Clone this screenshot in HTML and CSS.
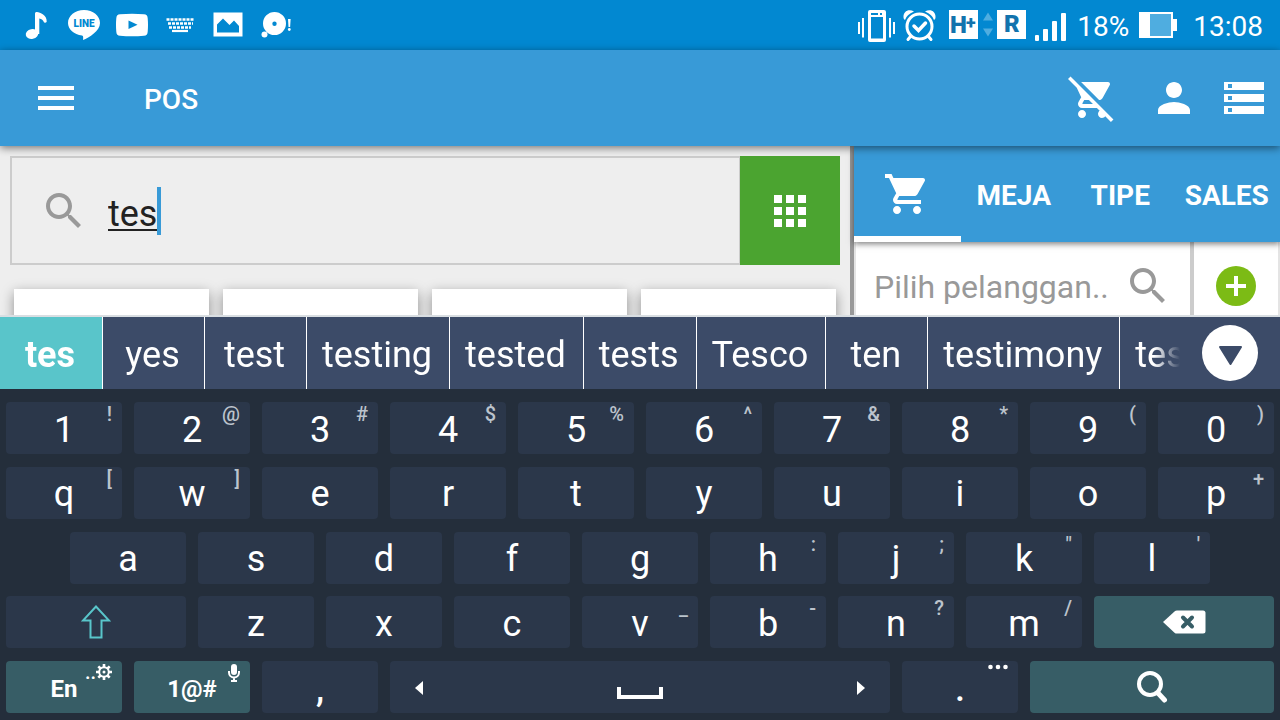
FILE: index.html
```html
<!DOCTYPE html>
<html lang="id">
<head>
    <meta charset="UTF-8">
    <meta name="viewport" content="width=device-width, initial-scale=1.0">
    <title>POS</title>
    <link rel="stylesheet" href="styles.css">
</head>
<body>
    <div class="status-bar">
        <div class="notifications">
            <svg width="32" height="32" viewBox="0 0 32 32" fill="#fff"><ellipse cx="12" cy="25" rx="6.3" ry="4.8" transform="rotate(-12 12 25)"/><path d="M15 4.500q0-2 2-1.500c3 .7 10 3 9.700 9.500 0 1.500-2.500 1.500-3 .2-.5-1.500-2-2.700-4.400-3.200V25H15z"/></svg>
            <svg width="32" height="32" viewBox="0 0 32 32"><path fill="#fff" d="M16 1C7 1 0 6.800 0 14c0 6.500 6 11.500 14 12.500 1.500.3 1.300 2 1 4.500C21 28.500 32 22 32 14 32 6.800 25 1 16 1z"/><text class="line-logo" x="16" y="18" text-anchor="middle">LINE</text></svg>
            <svg width="32" height="32" viewBox="0 0 32 32"><path fill="#fff" d="M4 5.300q12-1 24 0 3.500.2 3.700 4 .6 6.700 0 13.400-.2 3.800-3.700 4-12 1-24 0-3.500-.2-3.700-4-.6-6.700 0-13.400.2-3.800 3.700-4z"/><path fill="#0288d1" d="M12.500 11.500v8.500l9-4.200z"/></svg>
            <svg width="32" height="32" viewBox="0 0 32 32" stroke="#fff" fill="none"><path stroke-width="2.500" stroke-dasharray="3 1" d="M2.500 10.500h27M4 14.500h25"/><path stroke-width="2.500" stroke-dasharray="3 1" d="M5 18.500h22"/><path stroke-width="2.200" d="M8 22h16"/></svg>
            <svg width="32" height="32" viewBox="0 0 32 32"><path fill="#fff" fill-rule="evenodd" d="M1.500 3.500h29v24h-29zM5 23.500h22V17l-5-5.500-4.500 4.500L11 9.500 5 15.500z"/></svg>
            <svg width="32" height="32" viewBox="0 0 32 32" fill="#fff"><path fill-rule="evenodd" d="M14.500 3a11.500 11.500 0 1 1 0 23 11.500 11.500 0 0 1 0-23zm0 9.500a2.200 2.200 0 1 0 0 4.400 2.200 2.200 0 0 0 0-4.400z"/><circle cx="4.500" cy="25.500" r="3"/><path d="M28 10h2.600l-.5 8h-1.600z"/><circle cx="29.300" cy="20.500" r="1.400"/></svg>
        </div>
        <div class="system">
            <svg width="38" height="34" viewBox="0 0 38 34"><path fill="#fff" fill-rule="evenodd" d="M13 2h14q2 0 2 2v28q0 2-2 2H13q-2 0-2-2V4q0-2 2-2zm1 7v21.500h12V9zm0-4v2h7V5zm9 0v2h2V5z"/><path stroke="#fff" stroke-width="2" d="M2 14v12M6 10v19.500M33 10v19.500M37 14v12"/></svg>
            <svg width="38" height="34" viewBox="0 0 38 34" fill="none" stroke="#fff"><circle cx="16.500" cy="18.500" r="12.500" stroke-width="3"/><path stroke-width="3.500" stroke-linecap="round" d="M11 18l4.500 4.500 7-7.500"/><path stroke-width="3" stroke-linecap="round" d="M7.500 28.500L5 31.500M25.500 28.500l2.500 3"/><path fill="#fff" stroke="none" d="M11 3.500C6 .5 0 3 .5 9.500q0 1.500 1.500 2.500 1.500-5.500 9-8.500zM22 3.500c5-3 11-.5 10.500 6q0 1.500-1.500 2.500-1.500-5.500-9-8.500z"/></svg>
            <svg width="78" height="34" viewBox="0 0 78 34"><path fill="#fff" d="M0 2h29v29H0zM48 2h29v29H48z"/><path fill="#4fade0" d="M39 4.500l5 8H34zM39 28.500l5-8H34z"/><text class="net-label" x="1" y="25">H</text><text class="net-plus" x="17" y="21">+</text><text class="net-label" x="55" y="24">R</text></svg>
            <svg width="34" height="34" viewBox="0 0 34 34" fill="#fff"><rect y="27" width="4" height="6" rx="1"/><rect x="8" y="21" width="5" height="12" rx="1"/><rect x="17" y="13" width="5" height="20" rx="1"/><rect x="26" y="5" width="5" height="28" rx="1"/></svg>
            <span class="status-text">18%</span>
            <svg width="48" height="34" viewBox="0 0 48 34"><path fill="#fff" d="M2 4h34v7h4v12h-4v7H2z"/><path fill="#4fade0" d="M13 6h21v22H13z"/></svg>
            <span class="status-text">13:08</span>
        </div>
    </div>

    <header class="app-bar">
        <button class="icon-btn" aria-label="Menu"><svg class="icon" viewBox="0 0 24 24"><path d="M3 18h18v-2H3v2zm0-5h18v-2H3v2zm0-7v2h18V6H3z"/></svg></button>
        <h1 class="title">POS</h1>
        <div class="actions">
            <button class="icon-btn clear-cart" aria-label="Kosongkan"><svg class="icon" viewBox="0 0 24 24"><path d="M22.730 22.730L2.770 2.770 2 2l-.73-.73L0 2.540l4.390 4.390 2.210 4.660-1.350 2.450c-.16.28-.25.61-.25.96 0 1.100.9 2 2 2h7.460l1.380 1.380c-.5.36-.83.95-.83 1.620 0 1.100.89 2 1.990 2 .67 0 1.260-.33 1.620-.84L21.460 24l1.270-1.270zM7.420 15c-.14 0-.25-.11-.25-.25l.03-.12.9-1.630h2.360l2 2H7.420zm8.130-2c.75 0 1.410-.41 1.750-1.030l3.580-6.490c.08-.14.12-.31.12-.48 0-.55-.45-1-1-1H6.540l9.010 9zM7 18c-1.100 0-1.990.9-1.990 2S5.900 22 7 22s2-.9 2-2-.9-2-2-2z"/></svg></button>
            <button class="icon-btn" aria-label="Akun"><svg class="icon" viewBox="0 0 24 24"><path d="M12 12c2.210 0 4-1.790 4-4s-1.790-4-4-4-4 1.790-4 4 1.790 4 4 4zm0 2c-2.670 0-8 1.340-8 4v2h16v-2c0-2.660-5.330-4-8-4z"/></svg></button>
            <button class="icon-btn" aria-label="Daftar"><svg class="icon" viewBox="0 0 24 24"><path d="M2 20h20v-4H2v4zm2-3h2v2H4v-2zM2 4v4h20V4H2zm4 3H4V5h2v2zm-4 7h20v-4H2v4zm2-3h2v2H4v-2z"/></svg></button>
        </div>
    </header>

    <main class="content">
        <section class="products">
            <div class="search-row">
                <label class="search-box">
                    <svg class="icon" viewBox="0 0 24 24"><path d="M15.500 14h-.79l-.28-.27C15.410 12.590 16 11.110 16 9.500 16 5.910 13.090 3 9.500 3S3 5.910 3 9.500 5.910 16 9.500 16c1.610 0 3.090-.59 4.230-1.570l.27.28v.79l5 4.990L20.490 19l-4.990-5zm-6 0C7.010 14 5 11.990 5 9.500S7.010 5 9.500 5 14 7.010 14 9.500 11.990 14 9.500 14z"/></svg>
                    <span class="search-field">
                        <input type="text" class="search-input" value="tes" aria-label="Cari produk">
                        <span class="caret"></span>
                    </span>
                </label>
                <button class="grid-btn" aria-label="Kategori"><svg class="icon" viewBox="0 0 24 24"><path d="M4 8h4V4H4v4zm6 12h4v-4h-4v4zm-6 0h4v-4H4v4zm0-6h4v-4H4v4zm6 0h4v-4h-4v4zm6-10v4h4V4h-4zm-6 4h4V4h-4v4zm6 6h4v-4h-4v4zm0 6h4v-4h-4v4z"/></svg></button>
            </div>
            <div class="cards">
                <div class="card"></div>
                <div class="card"></div>
                <div class="card"></div>
                <div class="card"></div>
            </div>
        </section>

        <section class="order">
            <nav class="tabs">
                <button class="tab active" aria-label="Keranjang"><svg class="icon" viewBox="0 0 24 24"><path d="M7 18c-1.100 0-1.990.9-1.990 2S5.900 22 7 22s2-.9 2-2-.9-2-2-2zM1 2v2h2l3.600 7.590-1.350 2.450c-.16.28-.25.61-.25.96 0 1.100.9 2 2 2h12v-2H7.420c-.14 0-.25-.11-.25-.25l.03-.12.9-1.630h7.450c.75 0 1.410-.41 1.750-1.030l3.580-6.490c.08-.14.12-.31.12-.48 0-.55-.45-1-1-1H5.210l-.94-2H1zm16 16c-1.100 0-1.990.9-1.990 2s.89 2 1.990 2 2-.9 2-2-.9-2-2-2z"/></svg></button>
                <button class="tab">MEJA</button>
                <button class="tab">TIPE</button>
                <button class="tab">SALES</button>
            </nav>
            <div class="customer-row">
                <label class="customer-box">
                    <input type="text" class="customer-input" placeholder="Pilih pelanggan.." aria-label="Pelanggan">
                    <svg class="icon" viewBox="0 0 24 24"><path d="M15.500 14h-.79l-.28-.27C15.410 12.590 16 11.110 16 9.500 16 5.910 13.090 3 9.500 3S3 5.910 3 9.500 5.910 16 9.500 16c1.610 0 3.090-.59 4.230-1.570l.27.28v.79l5 4.990L20.490 19l-4.990-5zm-6 0C7.010 14 5 11.990 5 9.500S7.010 5 9.500 5 14 7.010 14 9.500 11.990 14 9.500 14z"/></svg>
                </label>
                <button class="add-btn" aria-label="Tambah pelanggan"><svg width="40" height="40" viewBox="0 0 40 40"><circle cx="20" cy="20" r="20" fill="#7cbb15"/><path fill="#fff" d="M18 10h4v8h8v4h-8v8h-4v-8h-8v-4h8z"/></svg></button>
            </div>
        </section>
    </main>

    <div class="keyboard">
        <div class="suggestions">
            <div class="words">
                <button class="word selected">tes</button>
                <button class="word">yes</button>
                <button class="word">test</button>
                <button class="word">testing</button>
                <button class="word">tested</button>
                <button class="word">tests</button>
                <button class="word">Tesco</button>
                <button class="word">ten</button>
                <button class="word">testimony</button>
                <button class="word last">tes</button>
            </div>
            <button class="more-btn" aria-label="Lainnya"><svg width="56" height="56" viewBox="0 0 56 56"><circle cx="28" cy="28" r="28" fill="#fff"/><path fill="#3c4b68" stroke="#3c4b68" stroke-width="2" stroke-linejoin="round" d="M18 22h21L28.500 39z"/></svg></button>
        </div>

        <div class="keys">
            <button class="key">1<span class="hint">!</span></button>
            <button class="key">2<span class="hint">@</span></button>
            <button class="key">3<span class="hint">#</span></button>
            <button class="key">4<span class="hint">$</span></button>
            <button class="key">5<span class="hint">%</span></button>
            <button class="key">6<span class="hint">^</span></button>
            <button class="key">7<span class="hint">&amp;</span></button>
            <button class="key">8<span class="hint">*</span></button>
            <button class="key">9<span class="hint">(</span></button>
            <button class="key">0<span class="hint">)</span></button>

            <button class="key">q<span class="hint">[</span></button>
            <button class="key">w<span class="hint">]</span></button>
            <button class="key">e</button>
            <button class="key">r</button>
            <button class="key">t</button>
            <button class="key">y</button>
            <button class="key">u</button>
            <button class="key">i</button>
            <button class="key">o</button>
            <button class="key">p<span class="hint">+</span></button>

            <button class="key row-start">a</button>
            <button class="key">s</button>
            <button class="key">d</button>
            <button class="key">f</button>
            <button class="key">g</button>
            <button class="key">h<span class="hint">:</span></button>
            <button class="key">j<span class="hint">;</span></button>
            <button class="key">k<span class="hint">"</span></button>
            <button class="key">l<span class="hint">'</span></button>

            <button class="key wide icon-key shift" aria-label="Shift"><svg width="30" height="36" viewBox="0 0 30 36"><path fill="none" stroke="#59c5ca" stroke-width="2" d="M15 2.500L2 16.500h7.500v17h11v-17H28z"/></svg></button>
            <button class="key">z</button>
            <button class="key">x</button>
            <button class="key">c</button>
            <button class="key">v<span class="hint">_</span></button>
            <button class="key">b<span class="hint">-</span></button>
            <button class="key">n<span class="hint">?</span></button>
            <button class="key">m<span class="hint">/</span></button>
            <button class="key wide icon-key teal" aria-label="Hapus"><svg width="44" height="24" viewBox="0 0 44 24"><path fill="#fff" d="M1 12L12.500 1.500q1-.9 2.500-.9h26q2.500 0 2.500 2.500v18q0 2.500-2.500 2.500H15q-1.500 0-2.500-.9z"/><path stroke="#375d66" stroke-width="4" stroke-linecap="round" d="M21 7.500l9 9M30 7.500l-9 9"/></svg></button>

            <button class="key small teal">En<span class="hint bright">..<svg width="16" height="16" viewBox="0 0 16 16"><circle cx="8" cy="8" r="4.800" fill="none" stroke="#fff" stroke-width="2"/><circle cx="8" cy="8" r="1.500" fill="#fff"/><path stroke="#fff" stroke-width="2.600" d="M8 0v3M8 13v3M0 8h3M13 8h3M2.300 2.300l2.200 2.200M11.500 11.500l2.200 2.200M2.300 13.700l2.200-2.200M11.500 4.500l2.200-2.200"/></svg></span></button>
            <button class="key small teal">1@#<span class="hint bright"><svg width="12" height="18" viewBox="0 0 12 18"><rect x="3" width="6" height="11" rx="3" fill="#fff"/><path fill="none" stroke="#fff" stroke-width="2" d="M1 7v1.500a5 5 0 0 0 10 0V7M6 13v4M3 17h6"/></svg></span></button>
            <button class="key punct">,</button>
            <button class="key space" aria-label="Spasi">
                <svg width="8" height="14" viewBox="0 0 8 14"><path fill="#fff" d="M8 0v14L0 7z"/></svg>
                <svg class="space-mark" width="46" height="12" viewBox="0 0 46 12"><path fill="#fff" d="M0 0h4v8h38V0h4v12H0z"/></svg>
                <svg width="8" height="14" viewBox="0 0 8 14"><path fill="#fff" d="M0 0v14l8-7z"/></svg>
            </button>
            <button class="key punct">.<span class="hint bright"><svg width="20" height="6" viewBox="0 0 20 6" fill="#fff"><circle cx="2.500" cy="3" r="2.300"/><circle cx="10" cy="3" r="2.300"/><circle cx="17.500" cy="3" r="2.300"/></svg></span></button>
            <button class="key enter icon-key teal" aria-label="Cari"><svg width="32" height="34" viewBox="0 0 32 34" fill="none" stroke="#fff"><circle cx="14" cy="14" r="11" stroke-width="4"/><path stroke-width="5" stroke-linecap="round" d="M22 23l6.500 7"/></svg></button>
        </div>
    </div>
</body>
</html>
```
FILE: styles.css
```css
* {
    box-sizing: border-box;
}
body {
    margin: 0;
    height: 100vh;
    display: flex;
    flex-direction: column;
    overflow: hidden;
    font-family: Roboto, sans-serif;
    background-color: #eee;
    color: #fff;
}
button, input {
    border: none;
    padding: 0;
    margin: 0;
    background: none;
    color: inherit;
    font: inherit;
    outline: none;
}
svg {
    display: block;
    flex: none;
}
.icon {
    width: 48px;
    height: 48px;
    fill: currentColor;
}

/* status bar */
.status-bar {
    display: flex;
    justify-content: space-between;
    height: 50px;
    flex: none;
    padding: 0 17px 0 20px;
    background-color: #0288d1;
}
.notifications, .system {
    display: flex;
    align-items: center;
}
.notifications {
    gap: 16px;
}
.system {
    gap: 8px;
}
.status-text {
    padding-top: 3px;
    font-size: 28px;
}
.line-logo {
    font: 900 10px Roboto, sans-serif;
    fill: #0288d1;
}
.net-label, .net-plus {
    font: 900 24px Roboto, sans-serif;
    fill: #1273ad;
}
.net-plus {
    font-size: 18px;
}

/* app bar */
.app-bar {
    position: relative;
    z-index: 1;
    display: flex;
    align-items: center;
    height: 96px;
    flex: none;
    padding: 0 12px 0 32px;
    background-color: #389ad7;
    box-shadow: 0 2px 8px rgba(0, 0, 0, 0.5);
}
.title {
    margin: 0 0 0 64px;
    padding-top: 3px;
    font-size: 28px;
    font-weight: 500;
}
.actions {
    display: flex;
    gap: 22px;
    margin-left: auto;
}
.clear-cart {
    margin-right: 12px;
}

/* content */
.content {
    display: flex;
    flex: 1;
    min-height: 0;
    overflow: hidden;
}
.products {
    flex: 1;
    padding: 10px 10px 0;
    border-right: 4px solid #999;
}
.search-row {
    display: flex;
    height: 109px;
}
.search-box {
    display: flex;
    align-items: center;
    flex: 1;
    gap: 20px;
    padding-left: 28px;
    border: 2px solid #ccc;
    border-right-width: 1px;
    color: #999;
}
.search-field {
    position: relative;
    flex: 1;
}
.search-input {
    display: block;
    width: 100%;
    height: 48px;
    padding-top: 6px;
    font-size: 36px;
    color: #222;
    text-decoration: underline;
    text-decoration-thickness: 2px;
    text-underline-offset: 3px;
}
.caret {
    position: absolute;
    left: 49px;
    top: 0;
    width: 4px;
    height: 48px;
    background-color: #389ad7;
}
.grid-btn {
    display: flex;
    align-items: center;
    justify-content: center;
    width: 100px;
    background-color: #4ba430;
}
.cards {
    display: grid;
    grid-template-columns: repeat(4, 1fr);
    gap: 14px;
    padding: 24px 4px 0;
}
.card {
    height: 200px;
    background-color: #fff;
    box-shadow: 0 4px 12px rgba(0, 0, 0, 0.4);
}

/* order panel */
.order {
    width: 426px;
    background-color: #e4e4e4;
}
.tabs {
    position: relative;
    display: flex;
    height: 96px;
    background-color: #389ad7;
    box-shadow: 0 2px 6px rgba(0, 0, 0, 0.5);
}
.tab {
    display: flex;
    align-items: center;
    justify-content: center;
    flex: 1;
    padding-top: 3px;
    font-size: 28px;
    font-weight: 700;
}
.tab.active {
    padding-top: 0;
    box-shadow: inset 0 -6px #fff;
}
.customer-row {
    display: flex;
    height: 88px;
    padding: 0 2px;
}
.customer-box {
    display: flex;
    align-items: center;
    flex: 1;
    min-width: 0;
    padding: 0 18px;
    border-right: 4px solid #ccc;
    background-color: #fff;
    color: #999;
}
.customer-input {
    flex: 1;
    min-width: 0;
    padding-top: 2px;
    font-size: 32px;
}
.customer-input::placeholder {
    color: #999;
}
.add-btn {
    display: flex;
    align-items: center;
    justify-content: center;
    width: 84px;
    flex: none;
    background-color: #fff;
}

/* keyboard */
.keyboard {
    position: relative;
    z-index: 1;
    flex: none;
    border-top: 2px solid #d9dee2;
    background-color: #242e3b;
}
.suggestions {
    display: flex;
    align-items: center;
    height: 72px;
    padding-right: 22px;
    background-color: #3c4b68;
}
.words {
    display: flex;
    flex: 1;
    height: 100%;
    margin-right: 12px;
    overflow: hidden;
    -webkit-mask-image: linear-gradient(to left, transparent 10px, #000 36px);
    mask-image: linear-gradient(to left, transparent 10px, #000 36px);
}
.word {
    flex: none;
    min-width: 102px;
    padding: 4px 17px 0 15px;
    border-right: 1px solid #fff;
    font-size: 36px;
}
.word.selected {
    min-width: 103px;
    background-color: #59c5ca;
    font-weight: 700;
}
.word.last {
    min-width: 0;
    padding-right: 0;
    border-right: none;
}
.keys {
    display: grid;
    grid-template-columns: repeat(20, 1fr);
    grid-auto-rows: 52px;
    column-gap: 12px;
    align-content: space-between;
    height: 331px;
    padding: 13px 6px 7px;
}
.key {
    position: relative;
    grid-column: span 2;
    display: flex;
    align-items: center;
    justify-content: center;
    padding-top: 3px;
    border-radius: 4px;
    background-color: #2b374a;
    font-size: 36px;
}
.key.row-start {
    grid-column: 2 / span 2;
}
.key.wide {
    grid-column: span 3;
}
.key.shift {
    grid-column: 1 / span 3;
}
.key.space {
    grid-column: span 8;
    justify-content: space-between;
    padding: 2px 25px 0;
}
.key.enter {
    grid-column: span 4;
}
.key.teal {
    background-color: #375d66;
}
.key.small {
    font-size: 24px;
    font-weight: 700;
}
.key.punct {
    font-weight: 500;
}
.key.icon-key {
    padding-top: 0;
}
.space-mark {
    margin-top: 10px;
}
.hint {
    position: absolute;
    top: 0;
    right: 10px;
    display: flex;
    font-size: 20px;
    line-height: 24px;
    font-weight: 500;
    color: #bcc3cc;
}
.hint.bright {
    top: 3px;
    color: #fff;
    line-height: 16px;
}
```
